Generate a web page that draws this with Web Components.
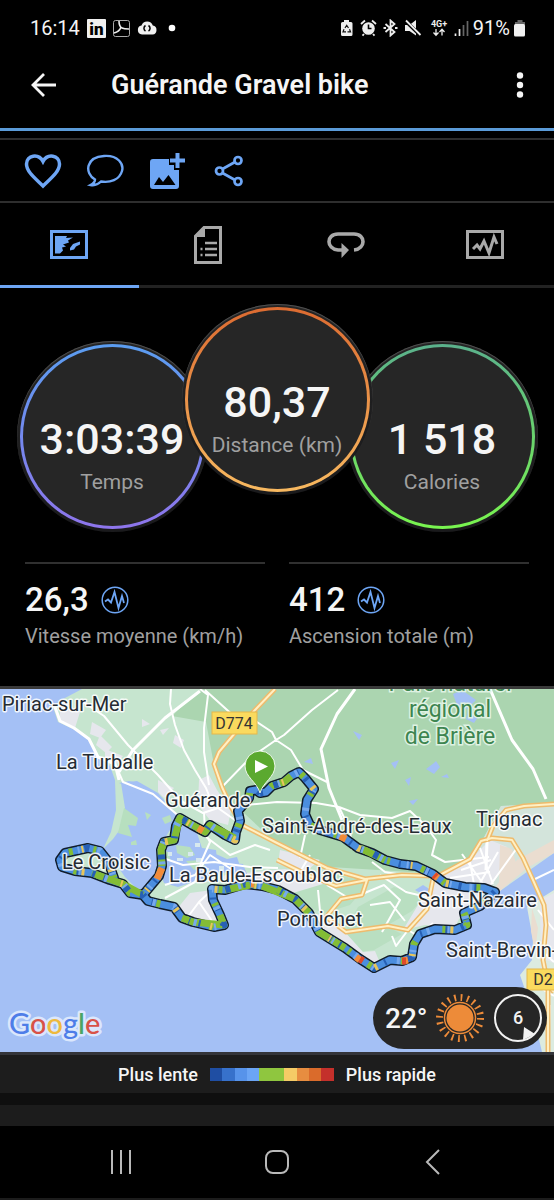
<!DOCTYPE html>
<html lang="fr">
<head>
  <meta charset="UTF-8">
  <meta name="viewport" content="width=device-width, initial-scale=1.0">
  <title>Guérande Gravel bike</title>
  <style>
    body {
      margin: 0;
      background: #000;
      color: #f5f5f5;
      font-family: Roboto, "Liberation Sans", sans-serif;
    }
  </style>
</head>
<body>

<template id="status-bar-template">
  <style>
    :host {
      display: flex;
      align-items: center;
      justify-content: space-between;
      height: 56px;
      padding: 0 28px 0 30px;
      box-sizing: border-box;
      font-size: 20px;
    }
    div { display: flex; align-items: center; gap: 7px; }
    .right { gap: 4px; }
    .icons { gap: 5px; }
    svg { display: block; }
  </style>
  <div>
    <span>16:14</span>
    <svg width="19" height="19" viewBox="0 0 19 19"><rect width="19" height="19" rx="1" fill="#f0f0f0"/><text x="9.500" y="16" text-anchor="middle" font-size="17" font-weight="900" fill="#000">in</text></svg>
    <svg width="17" height="17" viewBox="0 0 17 17" fill="none" stroke="#eee"><rect x=".5" y=".5" width="16" height="16" rx="2" stroke="#aaa"/><path d="M6 1c0 4 1 6 3 7 2 1 5 1 7 1M8 7c-1 3-3 5-7 6" stroke-width="1.600"/></svg>
    <svg width="20" height="14" viewBox="0 0 20 14"><path d="M5 13.500a4.500 4.500 0 0 1-.5-8.900 6 6 0 0 1 11.300 0A4.500 4.500 0 0 1 15.500 13.500z" fill="#f0f0f0"/><path d="M8.500 4.500a3.200 3.200 0 0 0 0 5.500M11.500 4.500a3.200 3.200 0 0 1 0 5.500" fill="none" stroke="#000" stroke-width="1.500"/></svg>
    <svg width="13" height="8" viewBox="0 0 13 8"><circle cx="8" cy="4" r="3.300" fill="#fff"/></svg>
  </div>
  <div class="right">
    <div class="icons">
      <svg width="17" height="18" viewBox="0 0 17 18"><path d="M6 1h5v2h2q1.500 0 1.500 1.500V15.500q0 1.500-1.500 1.500H4.500Q3 17 3 15.500V4.500Q3 3 4.500 3H6z" fill="#eee"/><path d="M7 9l1.700-2.700L10.500 9M11.500 10.300l1 2.500h-3M8 12.800H5l1-2.500" fill="none" stroke="#111" stroke-width="1.200"/></svg>
      <svg width="17" height="18" viewBox="0 0 17 18"><circle cx="8.500" cy="9.500" r="6.300" fill="#eee"/><path d="M8.500 5.500v4h3" stroke="#000" stroke-width="1.600" fill="none"/><path d="M1 5l4-3.500M16 5l-4-3.500M4 15l-1.500 1.700M13 15l1.500 1.700" stroke="#eee" stroke-width="1.800"/></svg>
      <svg width="17" height="18" viewBox="0 0 17 18" fill="none" stroke="#eee" stroke-width="1.800"><path d="M3.500 5l9 8-4 3.500v-15L12.500 5l-9 8"/><path d="M1.500 9h2.500M13 9h2.500"/></svg>
      <svg width="18" height="18" viewBox="0 0 18 18"><path d="M1 6h4.500L12 1v15.500L5.500 12H1z" fill="#eee"/><path d="M1 1.500l15.500 15" stroke="#000" stroke-width="3.600"/><path d="M2 1.500l14.500 14.500" stroke="#eee" stroke-width="1.800"/></svg>
      <svg width="22" height="20" viewBox="0 0 22 20"><text x="12" y="9" text-anchor="middle" font-size="9" font-weight="700" fill="#eee">4G+</text><path d="M9 11v6M6.500 14.500L9 17.200l2.500-2.700M15 17.500v-6M12.500 14l2.500-2.700 2.500 2.700" fill="none" stroke="#eee" stroke-width="1.300"/></svg>
      <svg width="15" height="17" viewBox="0 0 15 17"><path d="M1.500 13.500V16M5.500 9v7" stroke="#eee" stroke-width="1.700"/><path d="M9.500 5v11M13.500 1v15" stroke="#666" stroke-width="1.700"/></svg>
    </div>
    <span>91%</span>
    <svg width="12" height="17" viewBox="0 0 12 17"><path d="M3.500 0h5v2H11v3H1V2h2.500z" fill="#666"/><rect x="0" y="4" width="11" height="12.500" rx="1.500" fill="#f0f0f0"/></svg>
  </div>
</template>

<template id="app-bar-template">
  <style>
    :host {
      display: grid;
      grid-template-columns: 40px 1fr 40px;
      column-gap: 48px;
      align-items: center;
      height: 75px;
      padding: 0 14px 14px 23px;
      box-sizing: border-box;
      border-bottom: 3px solid #5b9bd8;
    }
    h1 { margin: 0; font-size: 27px; line-height: 32px; font-weight: 600; white-space: nowrap; }
    button { display: grid; place-items: center; width: 40px; height: 40px; padding: 0; border: 0; background: none; color: inherit; }
  </style>
  <button aria-label="Retour">
    <svg width="28" height="28" viewBox="0 0 28 28" fill="none" stroke="currentColor" stroke-width="2.800"><path d="M27 14H4M15 3L4 14l11 11"/></svg>
  </button>
  <h1><slot></slot></h1>
  <button aria-label="Plus d'options">
    <svg width="8" height="26" viewBox="0 0 8 26" fill="currentColor"><circle cx="4" cy="3.500" r="3.200"/><circle cx="4" cy="13" r="3.200"/><circle cx="4" cy="22.500" r="3.200"/></svg>
  </button>
</template>

<template id="action-row-template">
  <style>
    :host {
      display: flex;
      align-items: center;
      gap: 22px;
      height: 65px;
      margin-top: 7px;
      padding: 0 23px;
      box-sizing: border-box;
      border-top: 2px solid #2e2e2e;
      border-bottom: 2px solid #2e2e2e;
    }
    button { display: grid; place-items: center; width: 40px; height: 40px; padding: 0; border: 0; background: none; color: #6ea6f5; }
  </style>
  <button aria-label="J'aime">
    <svg width="38" height="36" viewBox="0 0 38 36" fill="none" stroke="currentColor" stroke-width="3.500"><path d="M19 33C12 26 2.500 19 2.500 11 2.500 2 14.500 0 19 8.500 23.500 0 35.500 2 35.500 11 35.500 19 26 26 19 33z"/></svg>
  </button>
  <button aria-label="Commenter">
    <svg width="38" height="34" viewBox="0 0 38 34" fill="none" stroke="currentColor" stroke-width="2.400"><path d="M9 25.500C-2 19 0 3 18 2 32 1 38 10 36 17 33.500 26 24 29 15 27.500 12.500 30 9 32 4.500 31 7.500 29.500 9 28 9 25.500z"/></svg>
  </button>
  <button aria-label="Ajouter une photo">
    <svg width="38" height="38" viewBox="0 0 38 38"><path d="M5 7h16v6h5v5h5v16q0 3-3 3H5q-3 0-3-3V10q0-3 3-3z" fill="currentColor"/><path d="M6 33l5-8 4 5 5.500-7 7 10z" fill="#000"/><path d="M29.500 1v15M22 8.500h15" stroke="currentColor" stroke-width="4"/></svg>
  </button>
  <button aria-label="Partager">
    <svg width="30" height="32" viewBox="0 0 30 32" fill="none" stroke="currentColor" stroke-width="2.700"><circle cx="5.500" cy="16" r="3.500"/><circle cx="24" cy="5.500" r="3.500"/><circle cx="24" cy="26.500" r="3.500"/><path d="M8.500 14l12.500-7M8.500 18l12.500 7"/></svg>
  </button>
</template>

<template id="tab-strip-template">
  <style>
    :host { display: block; }
    div { display: grid; grid-template-columns: repeat(4, 1fr); height: 85px; }
    button {
      display: grid;
      place-items: center;
      padding: 1px 0 0;
      border: 0;
      border-bottom: 3px solid #222;
      background: none;
      color: #a9a9a9;
    }
    button[aria-selected="true"] { color: #6ea6f5; border-color: #6ea6f5; }
  </style>
  <div role="tablist">
    <button role="tab" aria-selected="true" aria-label="Carte">
      <svg width="38" height="29" viewBox="0 0 38 29"><rect x="1.500" y="1.500" width="35" height="26" fill="none" stroke="currentColor" stroke-width="3"/><path d="M5 6h12l-1 2 7-.5-5 3 1 2-6 2 3 2-4 1 1 3-3 3H5z" fill="currentColor"/><path d="M20 18l3-4 7-2.500v3l-4 2-2 3-4 1z" fill="currentColor"/></svg>
    </button>
    <button role="tab" aria-selected="false" aria-label="Statistiques">
      <svg width="28" height="38" viewBox="0 0 28 38"><path d="M10 1.500h16.500v35h-25V10z" fill="none" stroke="currentColor" stroke-width="3"/><path d="M11 1v10H1z" fill="currentColor"/><path d="M11 17h12M11 23h12M11 29h12M6.500 23h2M6.500 29h2" stroke="currentColor" stroke-width="2.500"/></svg>
    </button>
    <button role="tab" aria-selected="false" aria-label="Tours">
      <svg width="38" height="27" viewBox="0 0 38 27"><path d="M16 19h-5C-1 18-1 3 11 3h16C39 3 39 18 27 19" fill="none" stroke="currentColor" stroke-width="3.600"/><path d="M14.500 12l7.500 7-7.500 8z" fill="currentColor"/></svg>
    </button>
    <button role="tab" aria-selected="false" aria-label="Graphiques">
      <svg width="38" height="29" viewBox="0 0 38 29" fill="none" stroke="currentColor" stroke-width="3"><rect x="1.500" y="1.500" width="35" height="26"/><path d="M7 19l4-4 3 4 4-8 5 12 5-16 3 7"/></svg>
    </button>
  </div>
</template>

<template id="stat-ring-template">
  <style>
    :host {
      display: block;
      box-sizing: border-box;
      flex: none;
      width: 191px;
      height: 191px;
      padding: 3px;
      border-radius: 50%;
      background: linear-gradient(#242424, #1a1a1c);
      box-shadow: inset 0 1px 1px #555;
    }
    .ring {
      display: flex;
      flex-direction: column;
      align-items: center;
      box-sizing: border-box;
      height: 100%;
      padding-top: 66px;
      border: 3px solid transparent;
      border-radius: 50%;
      background:
        linear-gradient(#262626, #262626) padding-box,
        linear-gradient(var(--from), var(--to)) border-box;
      white-space: nowrap;
    }
    .value { font-size: 43px; line-height: 52px; font-weight: 500; }
    .label { font-size: 21px; line-height: 34px; color: #a0a0a0; }
  </style>
  <div class="ring">
    <span class="value"><slot></slot></span>
    <span class="label"><slot name="label"></slot></span>
  </div>
</template>

<template id="stat-item-template">
  <style>
    :host { display: block; border-top: 2px solid #303030; padding-top: 15px; }
    .value { display: flex; align-items: center; gap: 12px; font-size: 33px; line-height: 42px; font-weight: 500; }
    .label { font-size: 20px; line-height: 30px; color: #a0a0a0; white-space: nowrap; }
  </style>
  <div class="value">
    <slot></slot>
    <svg width="28" height="28" viewBox="0 0 28 28" fill="none" stroke="#6ea6f5"><circle cx="14" cy="14" r="12.800" stroke-width="1.500"/><path d="M4 15.500l3-2 3 3L13.500 6l4 16 3.500-12 2 7" stroke-width="1.800"/></svg>
  </div>
  <div class="label"><slot name="label"></slot></div>
</template>

<template id="ride-map-template">
  <style>
    :host {
      display: block;
      position: relative;
      border-top: 3px solid #3a3a3a;
      border-bottom: 3px solid #34353a;
    }
    svg { display: block; width: 100%; height: auto; background: #a4c0f5; }
    .town { font-size: 20px; fill: #252b33; stroke: #fff; stroke-width: 3px; stroke-opacity: .85; paint-order: stroke; stroke-linejoin: round; }
    .park { font-size: 23px; fill: #3d8550; stroke: #dff2e3; stroke-width: 3px; paint-order: stroke; text-anchor: middle; }
    .road { fill: none; stroke: #fff; stroke-width: 2; stroke-linejoin: round; }
    .wide { stroke-width: 3; }
    .major { fill: none; stroke: #eebb6d; stroke-width: 5; stroke-linejoin: round; }
    .major-fill { fill: none; stroke: #fff0c4; stroke-width: 2; stroke-linejoin: round; }
    .shield { font-size: 16px; fill: #333; text-anchor: middle; }
    .logo { font-family: Lato, sans-serif; font-size: 29px; font-weight: 500; stroke: #dbe7fc; stroke-width: 5px; paint-order: stroke; stroke-linejoin: round; }
    ::slotted(*) { position: absolute; right: 7px; bottom: 3px; }
  </style>
  <svg viewBox="0 689 554 363" role="img" aria-label="Parcours">
    <defs>
      <path id="track" d="M260 793L256 790 250 791 249 798 238 811 240 821 236 832 235 840 225 835 210 825 205 832 192 825 180 818 176 826 174 840 164 842 161 850 162 866 159 876 148 889 143 895M260 793L266 792 272 786 284 782 291 776 299 772 305 778 314 789 307 800 305 814 310 825 320 830 343 837 358 848 372 853 385 860 400 864 416 866 433 874 445 883 465 887 484 888 495 892M495 892L480 906 464 913 467 925 455 930 435 929 420 934 414 944 412 957 402 961 390 960 374 968 360 959 345 948 319 932 309 913 295 899 278 890 262 886 245 884 225 890 212 889 213 900 220 915 224 925 214 927 193 922 182 918 174 907 160 904 148 901 143 895M143 895L130 893 123 884 110 880 92 873 75 871 62 867 60 860 65 853 88 848 100 851 108 861 114 878"/>
      <path id="highways" d="M275 689L255 710 235 733 219 752 214 764 222 787 231 807 242 825 275 842 327 868 365 879 402 875 433 876M438 876L470 859 481 841 492 838 512 840 523 858 533 880 544 905 546 925 543 960 548 985 554 992M487 841L493 826 506 810 524 806 554 804M277 860L310 876 336 886 367 880 362 895 341 899 326 917 346 932 388 926 408 930 427 909 433 879"/>
    </defs>
    <!-- land and parks -->
    <path d="M82 689L65 698 53 707 58 722 73 729 87 736 95 752 110 766 115 780 116 810 111 832 103 849 113 839 124 824 125 808 121 783 137 781 158 793 178 816 160 847 156 880 141 893 125 877 109 854 90 847 65 852 60 867 94 874 112 881 132 893 170 907 193 922 224 926 212 890 245 884 280 891 306 911 319 932 353 955 374 969 403 961 417 934 464 929 464 913 496 892 510 883 529 867 554 852V689z" fill="#c6e5cf"/>
    <path d="M200 689L172 716 206 722 214 765 230 800 275 842 330 867 410 872 440 874 470 859 482 841 501 806 554 803V689z" fill="#abd5b0"/>
    <path d="M282 895L338 875 369 882 350 905 325 913 306 907zM338 933L390 928 402 934 374 950 360 952zM358 907L394 887 425 896 412 911 388 925 345 931z" fill="#b9dfc1"/>
    <path d="M482 841L501 806 554 804V853L500 891 440 886 433 877 470 859z" fill="#d3e4db"/>
    <path d="M527 907L554 890V1052H542L532 1010 520 975 532 960 533 940z" fill="#dcebe0"/>
    <!-- built-up areas and sand -->
    <path d="M60 700l20 12-5 16-15-7zM92 722l14 8-6 8-10-4zM100 735l12 12-6 6-10-8zM105 749l18 7-6 8-12-5zM199 780l10-5 8 15 14 20-3 15-18-5-12-15zM158 780l16 8-10 10-6-6zM175 735l9 5-3 8-8-5zM142 719l8 5-8 3zM160 730l9-2-6 7zM280 850l40 10-15 12-27-8zM190 893l22-3 12 36-32-5-15-12zM225 875l60-6 48 12-40 12 15 20-30-22-45-4-12-8zM310 913l18 3 17 16 18 20 12-1 5 12-18 3-45-33zM403 930l30-50 35-18 22-22 17 7-10 30-8 12-30 30-4 8-30-2zM540 900l14-7v70l-13-5z" fill="#e6e7ed"/>
    <path d="M517 860L554 840V853L527 868 500 891 496 886zM500 845l12 4 4 14-9 22-8-3zM532 908l6 20-3 25-4-22z" fill="#eaddd0"/>
    <!-- salt marshes -->
    <path d="M119 783l10 4-4 9 11-4 2-9-9-2zM131 801l8 2 3 10-7 2-4-4zM155 860l9-20 12 1 2-20 18 9 6 18 14 2 2 18-12 12-16 3-12 4-14-4zM207 850l20 9 10-2 6 18-15-4-12 5zM225 862l18 2 4 10h-20z" fill="#a4c0f5"/>
    <path d="M124 808l14 10-2 8-8-1 4 12-14-4zM145 812l6 3-4 5zM162 818l8-3 2 6-7 3zM131 842l5-2 1 5h-6zM160 850l8 2 3 9-8-2zM176 845l14 2 5 8-8 3-10-5zM186 861l14-1 6 7-12 3z" fill="#b7dfbf"/>
    <path d="M168 852h4v4h-4zM177 858h6v3h-6zM188 852h5v4h-5zM196 858h6v4h-6zM202 868h7v4h-7zM184 875h7v3h-7zM207 878h7v4h-7zM195 843h5v4h-5zM219 866h5v4h-5zM174 832h5v4h-5z" fill="#d7e9ee"/>
    <path d="M353 731l9 4-3 5zM391 763l8-3-4 9zM426 769l8-6 2-2 4 6-6 7zM405 780l6-3-2 9zM409 801l9-2-5 6zM304 762l7-4 2 6zM453 694l9-4 14 10-9 9-10-4zM468 710l12 4-6 9-8-4zM441 777l6-3 2 4zM415 890l8-5 8 5-6 6z" fill="#a4c0f5"/>
    <!-- minor roads -->
    <path class="road" d="M80 700L104 716 128 745 158 775 181 801 203 813 218 808 242 825M171 689L170 704 175 725 184 750 195 770 206 788 214 808M200 689L208 695 204 728 204 752 209 785M205 690L236 718 254 720 272 732 276 740M276 740L250 758 221 788M276 740L284 735 312 710 338 690M276 740L291 750 303 770 327 782M204 812L205 833 210 842 202 860 195 882 165 898M115 764L123 782 153 794 181 818 230 855 255 845 270 850M235 806L277 802 316 803 339 807M339 807L360 815 392 818 410 811 425 825 436 840 432 855 445 862 489 857M339 807L350 830 352 850M305 835L300 858M372 862L385 872 402 875M327 885L350 899 384 885 400 900 382 932M300 872L310 855M318 890L320 911M370 905L390 902 405 921M380 875L406 892 431 898M392 936l4 10 12-16 10 6 15-13M461 870L491 860M470 862L475 890M480 848L493 884M450 878L490 872M462 854L486 888M498 852L480 883M517 848L491 884M554 870L533 880M538 910L554 930M541 950L554 962M535 985L554 996M550 1005L548 1052"/>
    <path class="road wide" d="M55 707L60 721 74 728 89 739 98 757 115 764 119 780M355 689L337 714 321 749 329 788 342 820M490 689L512 740 533 769 546 799M200 691L165 718 133 750 119 772M487 841L486 870"/>
    <path class="road" d="M163 858L183 865 214 862 250 867 278 868M165 885L195 875 210 855 234 871M187 918L199 902 214 888M199 902L212 921"/>
    <!-- main roads -->
    <use href="#highways" class="major"/>
    <use href="#highways" class="major-fill"/>
    <path d="M548 985V1052" class="major"/>
    <path d="M548 985V1052" class="major-fill"/>
    <!-- recorded track, coloured by speed -->
    <g fill="none" stroke-linejoin="round">
      <use href="#track" stroke="#111d2b" stroke-width="10" stroke-linecap="round"/>
      <use href="#track" stroke="#4b8edf" stroke-width="7" stroke-linecap="round"/>
      <path d="M235 838L210 825 205 832 180 818 174 840 164 842 161 850 162 866M272 786L284 782 291 776M360 848L385 860M319 932L345 948M309 913L295 899 262 886M250 885L225 890M220 915L224 925 193 922 182 918M143 895L123 884 92 873M467 920L464 913" stroke="#83bd35" stroke-width="7"/>
      <use href="#track" stroke="#2760b5" stroke-width="7" stroke-dasharray="3 13 5 22 2 9"/>
      <use href="#track" stroke="#83bd35" stroke-width="7" stroke-dasharray="4 21 3 32" stroke-dashoffset="12"/>
      <use href="#track" stroke="#77a9ed" stroke-width="7" stroke-dasharray="3 25 2 18" stroke-dashoffset="7"/>
      <use href="#track" stroke="#e7c65c" stroke-width="7" stroke-dasharray="3 53 2 38" stroke-dashoffset="31"/>
      <path d="M162 868l-5 11M203 831l-5-3M356 957l4 3M403 961l5-1M434 875l4 3M251 884h3M340 836l6 3" stroke="#f28b39" stroke-width="7"/>
      <path d="M360 959l3 2M402 961h4M434 875l2 2" stroke="#df4a29" stroke-width="7"/>
    </g>
    <!-- start pin -->
    <path d="M260 793C257 782 245 777 245 766a15 15 0 0 1 30 0c0 11-12 16-15 27z" fill="#5ba92f" stroke="#eef8ec" stroke-width="1"/>
    <path d="M255 760v13l13-6.500z" fill="#fff"/>
    <!-- place names -->
    <text class="town" x="2" y="711">Piriac-sur-Mer</text>
    <text class="town" x="56" y="769">La Turballe</text>
    <text class="town" x="165" y="807">Guérande</text>
    <text class="town" x="62" y="869">Le Croisic</text>
    <text class="town" x="169" y="882">La Baule-Escoublac</text>
    <text class="town" x="262" y="833">Saint-André-des-Eaux</text>
    <text class="town" x="476" y="826">Trignac</text>
    <text class="town" x="418" y="907">Saint-Nazaire</text>
    <text class="town" x="277" y="926">Pornichet</text>
    <text class="town" x="446" y="957">Saint-Brevin-</text>
    <text class="park" x="450" y="691">Parc naturel</text>
    <text class="park" x="450" y="717">régional</text>
    <text class="park" x="450" y="744">de Brière</text>
    <rect x="212" y="712" width="45" height="22" fill="#fada5e" stroke="#e6b84a"/>
    <text class="shield" x="234" y="729">D774</text>
    <rect x="527" y="969" width="50" height="21" fill="#fada5e" stroke="#e6b84a"/>
    <text class="shield" x="552" y="985">D213</text>
    <text class="logo" x="9" y="1034"><tspan fill="#4e7de8">G</tspan><tspan fill="#d85248">o</tspan><tspan fill="#eeb93d">o</tspan><tspan fill="#4e7de8">g</tspan><tspan fill="#4aa564">l</tspan><tspan fill="#d85248">e</tspan></text>
  </svg>
  <slot></slot>
</template>

<template id="weather-pill-template">
  <style>
    :host {
      display: flex;
      align-items: center;
      justify-content: space-between;
      box-sizing: border-box;
      width: 174px;
      height: 62px;
      padding: 0 4px 0 12px;
      border-radius: 31px;
      background: #262626;
      font-size: 28px;
      font-weight: 500;
    }
    svg { display: block; }
  </style>
  <slot></slot>
  <svg width="50" height="50" viewBox="-25 -25 50 50"><circle r="20.500" fill="none" stroke="#ed8b39" stroke-width="7" stroke-dasharray="1.800 4.640"/><circle r="17" fill="#262626"/><circle r="15.500" fill="none" stroke="#ed8b39" stroke-width="1.500"/><circle r="13.500" fill="#ed8b39"/></svg>
  <svg width="50" height="50" viewBox="0 0 50 50"><circle cx="25" cy="25" r="23" fill="none" stroke="#f2f2f2" stroke-width="2"/><path d="M31 34l11 7-12 6z" fill="#f2f2f2"/><text x="25" y="31" text-anchor="middle" font-size="18" fill="#f2f2f2">6</text></svg>
</template>

<template id="speed-legend-template">
  <style>
    :host {
      display: flex;
      align-items: center;
      justify-content: center;
      gap: 12px;
      height: 38px;
      background: #1d1d1d;
      border-bottom: 12px solid #0f0f0f;
      font-size: 18px;
      font-weight: 500;
    }
    .scale { display: grid; grid-template-columns: repeat(10, 1fr); width: 124px; height: 13px; }
  </style>
  <slot name="slow"></slot>
  <div class="scale"></div>
  <slot name="fast"></slot>
</template>

<template id="nav-bar-template">
  <style>
    :host { display: block; border-top: 21px solid #1c1c1c; border-bottom: 2px solid #1c1c1c; }
    nav { display: flex; justify-content: space-around; align-items: center; height: 72px; padding: 0 43px; }
    button { display: grid; place-items: center; width: 48px; height: 48px; padding: 0; border: 0; background: none; color: #b9b9b9; }
    svg { fill: none; stroke: currentColor; stroke-width: 2; }
  </style>
  <nav>
    <button aria-label="Applications récentes"><svg width="24" height="26" viewBox="0 0 24 26"><path d="M3 1v24M12 1v24M21 1v24"/></svg></button>
    <button aria-label="Accueil"><svg width="26" height="26" viewBox="0 0 26 26"><rect x="2" y="2" width="22" height="22" rx="7"/></svg></button>
    <button aria-label="Précédent"><svg width="16" height="26" viewBox="0 0 16 26"><path d="M14 1L2 13l12 12"/></svg></button>
  </nav>
</template>

<template id="activity-page-template">
  <style>
    :host { display: block; overflow: hidden; }
    .rings { display: flex; justify-content: center; align-items: flex-start; padding: 16px 0 30px; }
    .rings stat-ring { margin-top: 37px; --from: #5b9df0; --to: #8e75ec; }
    .rings stat-ring.distance { margin: 0 -26px; z-index: 1; --from: #dc6b31; --to: #f8b960; }
    .rings stat-ring.calories { --from: #5bb18c; --to: #79f54f; }
    .items { display: grid; grid-template-columns: 1fr 1fr; gap: 24px; padding: 0 25px 35px; }
  </style>
  <status-bar></status-bar>
  <app-bar>Guérande Gravel bike</app-bar>
  <action-row></action-row>
  <tab-strip></tab-strip>
  <div class="rings">
    <stat-ring>3:03:39<span slot="label">Temps</span></stat-ring>
    <stat-ring class="distance">80,37<span slot="label">Distance (km)</span></stat-ring>
    <stat-ring class="calories">1 518<span slot="label">Calories</span></stat-ring>
  </div>
  <div class="items">
    <stat-item>26,3<span slot="label">Vitesse moyenne (km/h)</span></stat-item>
    <stat-item>412<span slot="label">Ascension totale (m)</span></stat-item>
  </div>
  <ride-map><weather-pill>22°</weather-pill></ride-map>
  <speed-legend><span slot="slow">Plus lente</span><span slot="fast">Plus rapide</span></speed-legend>
  <nav-bar></nav-bar>
</template>

<activity-page></activity-page>

<script>
  // Clones the template named after the element into its shadow root
  class TemplateElement extends HTMLElement {
    constructor() {
      super();
      const template = document.getElementById(`${this.localName}-template`);
      this.attachShadow({ mode: 'open' });
      this.shadowRoot.appendChild(template.content.cloneNode(true));
    }
  }

  // Colour scale from slowest to fastest
  class SpeedLegend extends TemplateElement {
    connectedCallback() {
      const colors = ['#1f4ea3', '#3771cb', '#5793ea', '#6ba5f5', '#8fc63f', '#8fc63f', '#f5cb66', '#e78d40', '#da6b2b', '#c4302b'];
      const scale = this.shadowRoot.querySelector('.scale');
      scale.replaceChildren(...colors.map((color) => {
        const step = document.createElement('span');
        step.style.background = color;
        return step;
      }));
    }
  }

  customElements.define('status-bar', class extends TemplateElement {});
  customElements.define('app-bar', class extends TemplateElement {});
  customElements.define('action-row', class extends TemplateElement {});
  customElements.define('tab-strip', class extends TemplateElement {});
  customElements.define('stat-ring', class extends TemplateElement {});
  customElements.define('stat-item', class extends TemplateElement {});
  customElements.define('ride-map', class extends TemplateElement {});
  customElements.define('weather-pill', class extends TemplateElement {});
  customElements.define('speed-legend', SpeedLegend);
  customElements.define('nav-bar', class extends TemplateElement {});
  customElements.define('activity-page', class extends TemplateElement {});
</script>

</body>
</html>
